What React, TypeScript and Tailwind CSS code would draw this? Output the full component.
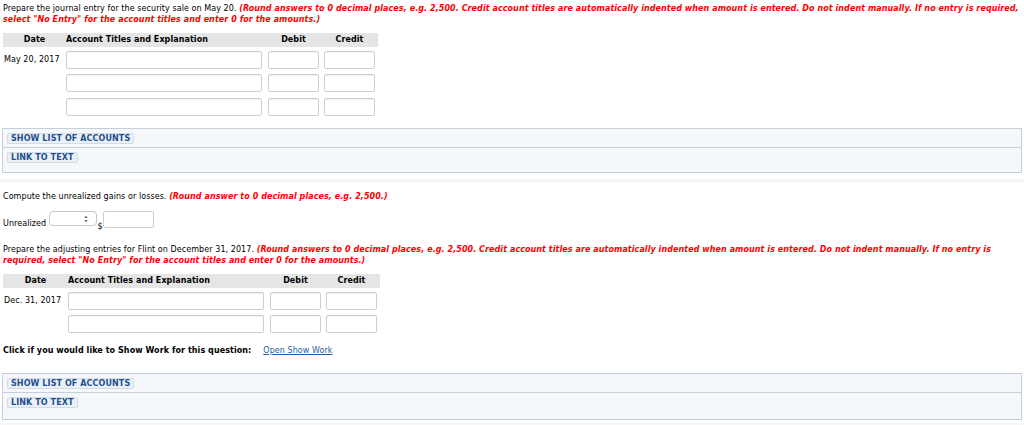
import React from "react";

const font = { fontFamily: '"DejaVu Sans", Verdana, sans-serif', letterSpacing: "0.07px" };

function Input({ w }: { w: string }) {
  return (
    <div
      className={`${w} h-[18px] border border-[#cfcfcf] rounded-[2px] bg-white shadow-[inset_0_1px_1px_rgba(0,0,0,0.06)]`}
    />
  );
}

function Btn({ children }: { children: React.ReactNode }) {
  return (
    <span className="inline-flex items-center h-[11px] px-[3px] bg-[#eaf0f6] border border-[#d3dbe4] rounded-[2px] text-[8px] leading-[9px] font-bold text-[#1f4f8e] tracking-[0.1px]">
      {children}
    </span>
  );
}

function LinkBox({ r1, r2 }: { r1: string; r2: string }) {
  return (
    <div className="ml-[2px] mr-[2px] border border-[#c6cfd9] bg-[#f4f8fb]">
      <div className={`${r1} border-b border-[#c6cfd9] pl-[4px] pt-[4px]`}>
        <Btn>SHOW LIST OF ACCOUNTS</Btn>
      </div>
      <div className={`${r2} pl-[4px] pt-[4px]`}>
        <Btn>LINK TO TEXT</Btn>
      </div>
    </div>
  );
}

function Table({
  date,
  rows,
  dateW,
  acctW,
}: {
  date: string;
  rows: number;
  dateW: string;
  acctW: string;
}) {
  const gaps = ["mt-[4px]", "mt-[5px]", "mt-[6px]"];
  return (
    <div className="ml-[3px]">
      <div className="flex items-center h-[14px] bg-[#e5e5e5] text-[8px] font-bold text-black w-fit pr-[3px]">
        <div className={`${dateW} text-center`}>Date</div>
        <div className={`${acctW} pl-[0px] mr-[6px]`}>Account Titles and Explanation</div>
        <div className="w-[51px] text-center mr-[5px]">Debit</div>
        <div className="w-[51px] text-center">Credit</div>
      </div>
      {Array.from({ length: rows }).map((_, i) => (
        <div key={i} className={`flex items-center ${gaps[i]}`}>
          <div className={`${dateW} text-[8px] text-black pl-[1px] whitespace-nowrap`}>
            {i === 0 ? date : ""}
          </div>
          <Input w={`${acctW} mr-[6px]`} />
          <Input w="w-[51px] mr-[5px]" />
          <Input w="w-[51px]" />
        </div>
      ))}
    </div>
  );
}

export default function App() {
  return (
    <div className="w-[1024px] h-[425px] bg-white overflow-hidden text-[8px] text-black" style={font}>
      <div className="pt-[3px] px-[3px] leading-[11px]">
        Prepare the journal entry for the security sale on May 20.{" "}
        <span className="text-[#ff0000] font-bold italic">
          (Round answers to 0 decimal places, e.g. 2,500. Credit account titles are automatically indented when amount is entered. Do not indent manually. If no entry is required, select "No Entry" for the account titles and enter 0 for the amounts.)
        </span>
      </div>

      <div className="mt-[8px]">
        <Table date="May 20, 2017" rows={3} dateW="w-[63px]" acctW="w-[196px]" />
      </div>

      <div className="mt-[12px]">
        <LinkBox r1="h-[19px]" r2="h-[24px]" />
      </div>
      <div className="mt-[6px] h-[4px] bg-[#f5f6f8]" />

      <div className="mt-[8px] px-[3px] leading-[11px]">
        Compute the unrealized gains or losses.{" "}
        <span className="text-[#ff0000] font-bold italic">
          (Round answer to 0 decimal places, e.g. 2,500.)
        </span>
      </div>

      <div className="mt-[9px] ml-[3px] flex items-start h-[17px]">
        <div className="w-[46px] mt-[7px] leading-[11px]">Unrealized</div>
        <div className="w-[48px] h-[15px] border border-[#c8c8c8] rounded-[4px] bg-white relative">
          <svg className="absolute right-[8px] top-[3px]" width="4" height="8" viewBox="0 0 4 8">
            <path d="M2 0.5 L3.6 3 L0.4 3 Z M2 7.5 L3.6 5 L0.4 5 Z" fill="#666" />
          </svg>
        </div>
        <div className="w-[6px] mt-[11px] leading-[9px] text-center">$</div>
        <div className="w-[51px] h-[17px] border border-[#cfcfcf] rounded-[2px] bg-white" />
      </div>

      <div className="mt-[16px] px-[3px] leading-[11px]">
        Prepare the adjusting entries for Flint on December 31, 2017.{" "}
        <span className="text-[#ff0000] font-bold italic">
          (Round answers to 0 decimal places, e.g. 2,500. Credit account titles are automatically indented when amount is entered. Do not indent manually. If no entry is required, select "No Entry" for the account titles and enter 0 for the amounts.)
        </span>
      </div>

      <div className="mt-[8px]">
        <Table date="Dec. 31, 2017" rows={2} dateW="w-[65px]" acctW="w-[196px]" />
      </div>

      <div className="mt-[12px] px-[3px] leading-[11px] flex">
        <span className="font-bold">Click if you would like to Show Work for this question:</span>
        <span className="ml-[12px] text-[#1d5fa0] underline">Open Show Work</span>
      </div>

      <div className="mt-[17px]">
        <LinkBox r1="h-[19px]" r2="h-[26px]" />
      </div>
      <div className="mt-[3px] h-[4px] bg-[#f5f6f8]" />
    </div>
  );
}
